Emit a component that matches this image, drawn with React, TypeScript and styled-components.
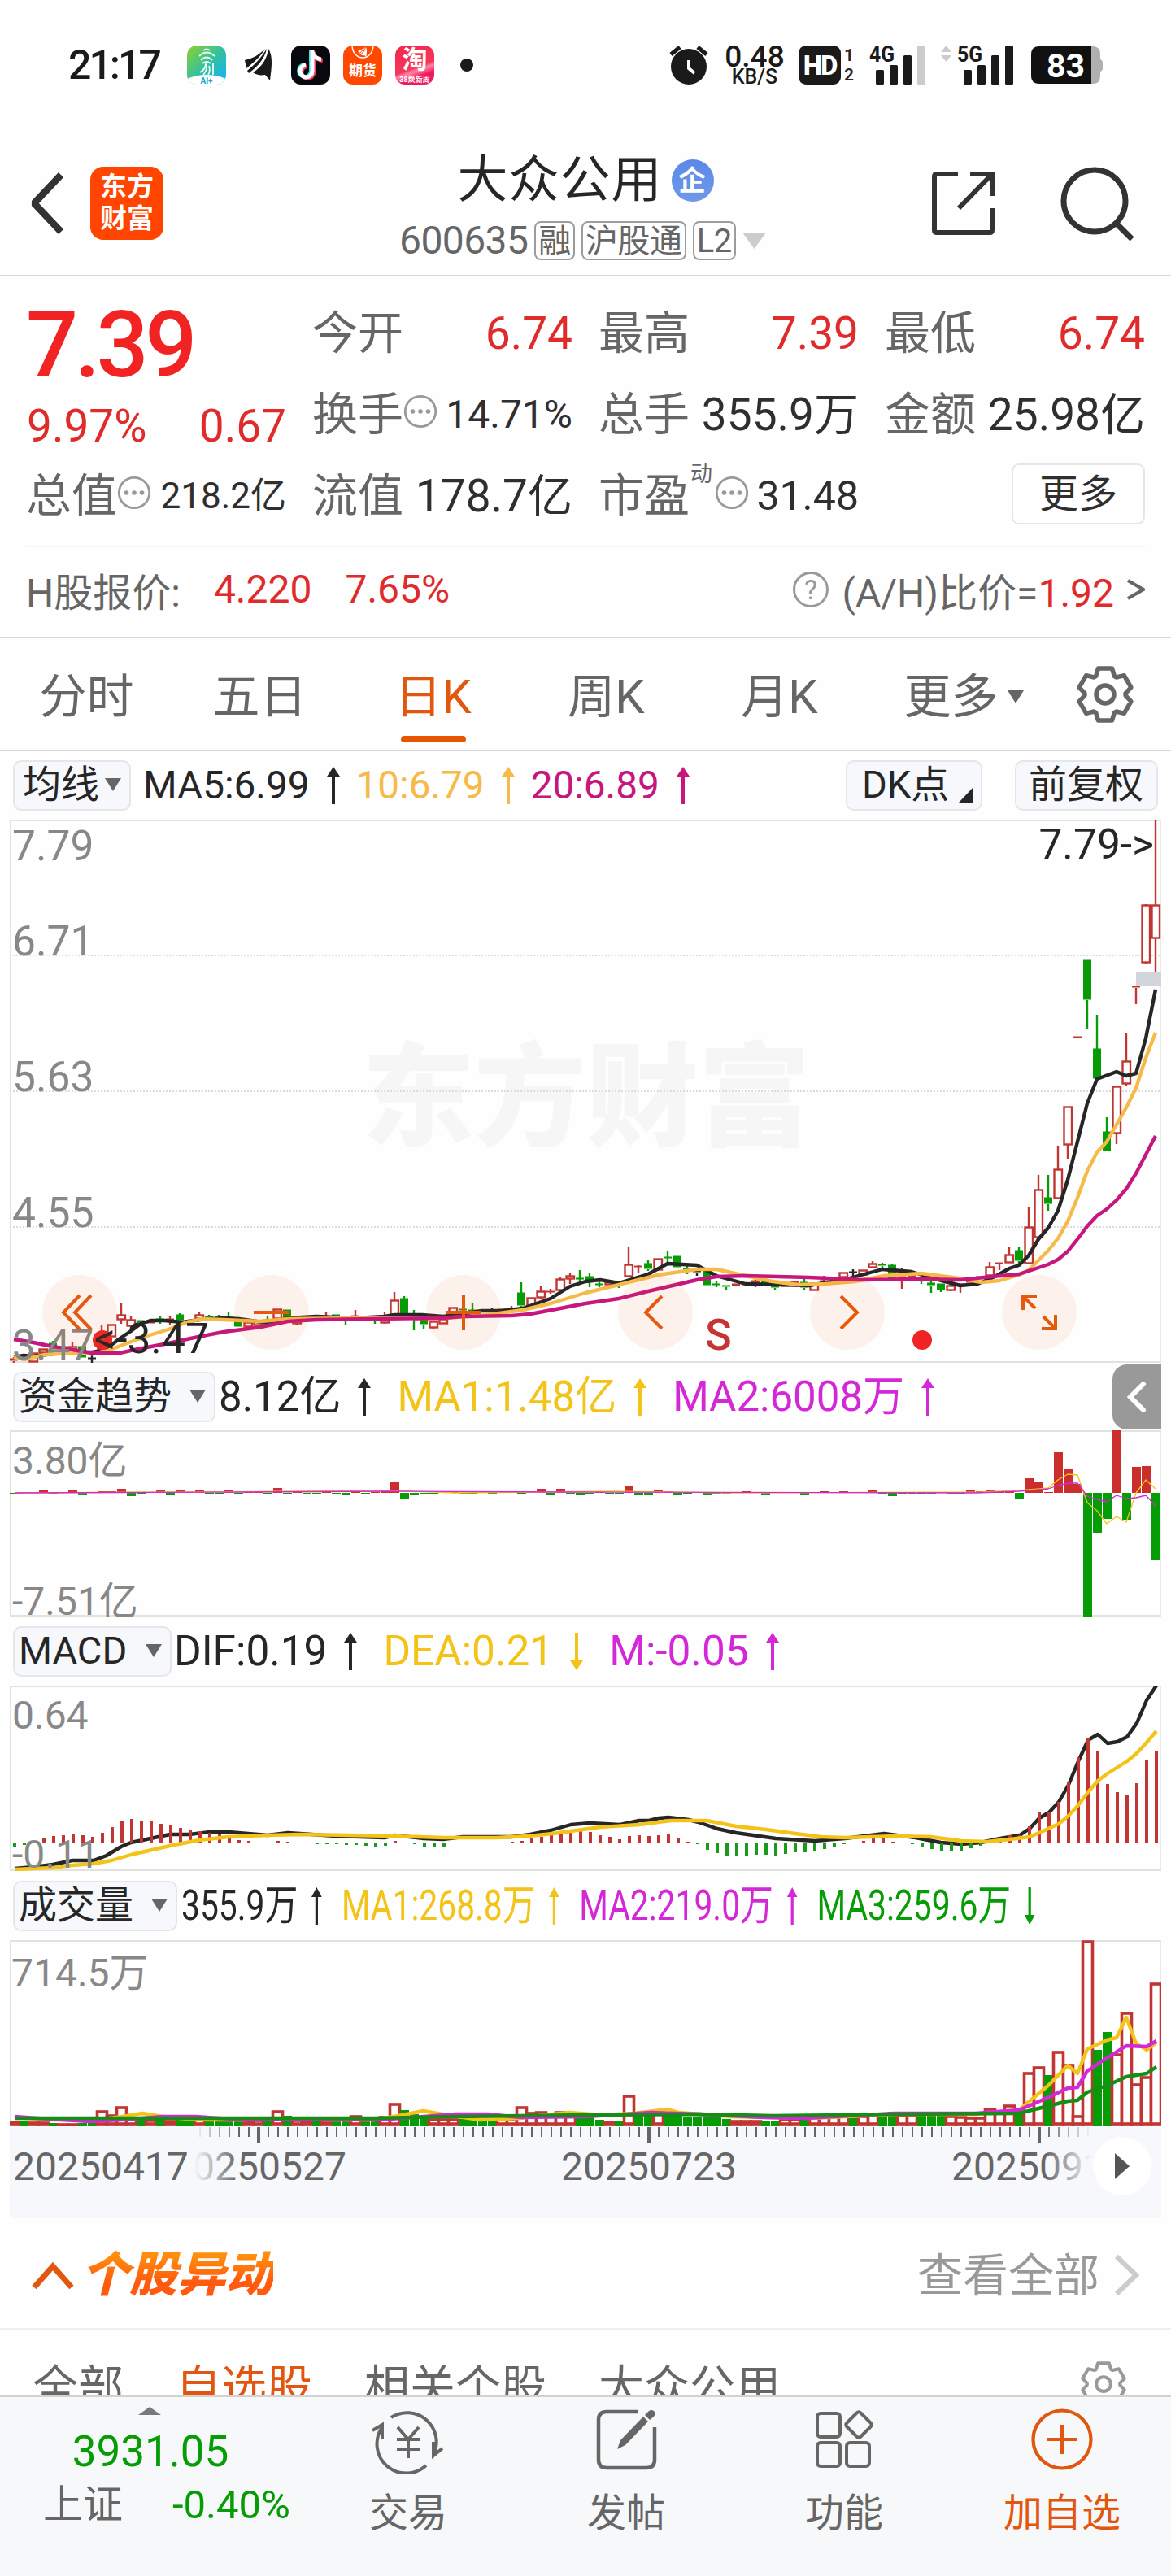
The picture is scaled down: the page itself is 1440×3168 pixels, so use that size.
import React from "react";
import styled, { createGlobalStyle } from "styled-components";

const RED = "#e02b2b";
const BAR_RED = "#c13632";
const GREEN = "#069c06";
const ORANGE = "#e2570f";
const YELLOW = "#f3c318";
const AMBER = "#f6ba49";
const MAGENTA = "#c5177d";
const VIOLET = "#d428d8";
const INK = "#262626";
const GRAY = "#666";

const GlobalStyle = createGlobalStyle`
  * { box-sizing: border-box; }
  body {
    margin: 0;
    background: #fefefe;
    font-family: Roboto, "Noto Sans CJK SC", sans-serif;
    color: ${INK};
  }
  svg { display: block; flex: none; }
`;

const Page = styled.div`
  width: 1440px;
  height: 3168px;
  overflow: hidden;
  display: flex;
  flex-direction: column;
`;

/* ---------- status bar ---------- */
const StatusBar = styled.div`
  height: 160px;
  flex: none;
  display: flex;
  align-items: center;
  padding: 0 84px 0 84px;
`;
const Clock = styled.div`
  width: 146px;
  font-size: 50px;
  font-weight: 500;
  letter-spacing: -3px;
  color: #1a1a1a;
  white-space: nowrap;
`;
const AppIcons = styled.div`
  display: flex;
  align-items: center;
  gap: 16px;
`;
const Dot = styled.i`
  width: 16px;
  height: 16px;
  border-radius: 50%;
  background: #1a1a1a;
  margin-left: 16px;
`;
const AppTile = styled.div<{ bg: string }>`
  width: 48px;
  height: 48px;
  border-radius: 12px;
  background: ${(p) => p.bg};
  color: #fff;
  overflow: hidden;
  display: flex;
  flex-direction: column;
  align-items: center;
`;
const TileText = styled.span<{ size: number; line: number }>`
  font-size: ${(p) => p.size}px;
  line-height: ${(p) => p.line}px;
  font-weight: 700;
  white-space: nowrap;
`;
const StatusRight = styled.div`
  margin-left: auto;
  display: flex;
  align-items: center;
  svg { overflow: visible; }
`;
const NetSpeed = styled.div`
  width: 78px;
  margin: 0 15px 0 18px;
  display: flex;
  flex-direction: column;
  align-items: center;
  font-size: 37px;
  line-height: 30px;
  font-weight: 500;
  color: #1a1a1a;
  small {
    font-size: 25px;
    line-height: 20px;
  }
`;
const HdBox = styled.div`
  width: 52px;
  height: 48px;
  border-radius: 9px;
  background: #1a1a1a;
  color: #fff;
  font-size: 33px;
  line-height: 49px;
  font-weight: 800;
  letter-spacing: -2px;
  text-align: center;
`;
const SimNumbers = styled.div`
  width: 35px;
  padding-left: 4px;
  font-size: 21px;
  line-height: 24px;
  font-weight: 600;
`;

/* ---------- title ---------- */
const Header = styled.header`
  height: 180px;
  flex: none;
  border-bottom: 2px solid #d8d8d8;
  display: flex;
  align-items: center;
  padding: 2px 43px 0 35px;
`;
const Logo = styled.div`
  width: 90px;
  height: 90px;
  margin: 0 0 0 31px;
  border-radius: 16px;
  background: #ff4500;
  color: #fff;
  font-size: 33px;
  line-height: 39px;
  font-weight: 700;
  text-align: center;
  padding-top: 5px;
`;
const TitleBlock = styled.div`
  width: 820px;
  margin: 2px 0 0 108px;
  display: flex;
  flex-direction: column;
  align-items: center;
`;
const Title = styled.div`
  display: flex;
  align-items: center;
  height: 80px;
  font-size: 62px;
  line-height: 80px;
  letter-spacing: 1px;
  padding-left: 2px;
`;
const Badge = styled.span`
  width: 52px;
  height: 52px;
  margin-left: 11px;
  border-radius: 50%;
  background: linear-gradient(#5a88ea, #6f99e8);
  color: #fff;
  font-size: 34px;
  line-height: 52px;
  font-weight: 700;
  text-align: center;
`;
const CodeRow = styled.div`
  display: flex;
  align-items: center;
  height: 50px;
  margin-top: 9px;
  padding-right: 5px;
  gap: 8px;
  color: ${GRAY};
  font-size: 48px;
  line-height: 50px;
  letter-spacing: -0.6px;
`;
const Tag = styled.span`
  height: 48px;
  padding: 0 3px;
  border: 2px solid #9c9c9c;
  border-radius: 8px;
  font-size: 40px;
  line-height: 45px;
  letter-spacing: -0.4px;
`;
const HeaderIcons = styled.div`
  margin-left: auto;
  display: flex;
  align-items: center;
  gap: 80px;
`;

/* ---------- quote ---------- */
const Quote = styled.section`
  height: 333px;
  flex: none;
  margin: 0 32px;
  padding-top: 20px;
  border-bottom: 2px solid #f4f4f4;
  display: grid;
  grid-template-columns: repeat(4, 320px);
  column-gap: 32px;
  grid-template-rows: repeat(3, 100px);
`;
const PriceBlock = styled.div`
  grid-row: span 2;
`;
const Price = styled.div`
  font-size: 113px;
  line-height: 130px;
  font-weight: 500;
  letter-spacing: -4.5px;
  color: #f22323;
`;
const Change = styled.div`
  display: flex;
  justify-content: space-between;
  font-size: 55px;
  line-height: 69px;
  color: ${RED};
  padding: 0 0 0 1px;
`;
const Cell = styled.div`
  display: flex;
  align-items: center;
  white-space: nowrap;
  line-height: 100px;
  svg { margin-bottom: 9px; }
`;
const CellLabel = styled.span`
  font-size: 56px;
  color: ${GRAY};
`;
const CellSup = styled.sup`
  align-self: flex-start;
  margin: 8px 3px 0 1px;
  font-size: 27px;
  line-height: 30px;
  color: ${GRAY};
`;
const CellValue = styled.span<{ size?: number; up?: boolean }>`
  margin-left: auto;
  font-size: ${(p) => p.size ?? 55}px;
  color: ${(p) => (p.up ? RED : "#2f2f2f")};
`;
const MoreButton = styled.button`
  width: 164px;
  height: 75px;
  margin: -5px 0 0 auto;
  border: 2px solid #e6e6e6;
  border-radius: 9px;
  background: #fff;
  font: inherit;
  font-size: 48px;
  line-height: 66px;
  color: #2f2f2f;
  padding: 0;
`;
const HShare = styled.div`
  height: 112px;
  flex: none;
  border-bottom: 2px solid #d8d8d8;
  padding: 0 32px 7px;
  display: flex;
  align-items: center;
  font-size: 48px;
  color: ${GRAY};
  white-space: nowrap;
`;
const Up = styled.span<{ gap?: number }>`
  color: ${RED};
  margin-left: ${(p) => p.gap ?? 0}px;
`;
const Ratio = styled.div`
  margin-left: auto;
  display: flex;
  align-items: center;
  gap: 16px;
`;

/* ---------- tabs ---------- */
const Tabs = styled.nav`
  height: 139px;
  flex: none;
  border-bottom: 2px solid #d8d8d8;
  display: grid;
  grid-template-columns: repeat(6, 213px) 1fr;
  align-items: center;
  justify-items: center;
`;
const Tab = styled.div<{ active?: boolean; shift?: number }>`
  height: 137px;
  display: flex;
  align-items: center;
  gap: 11px;
  font-size: 58px;
  line-height: 80px;
  padding: 7px 0 0 ${(p) => p.shift ?? 0}px;
  color: ${(p) => (p.active ? ORANGE : GRAY)};
  position: relative;
  &::after {
    content: "";
    display: ${(p) => (p.active ? "block" : "none")};
    position: absolute;
    left: 8px;
    bottom: 9px;
    width: 80px;
    height: 8px;
    border-radius: 4px;
    background: #e85500;
  }
`;

/* ---------- chart ---------- */
const LegendRow = styled.div<{ h: number }>`
  height: ${(p) => p.h}px;
  flex: none;
  padding: 0 16px;
  display: flex;
  align-items: center;
  position: relative;
`;
const Chip = styled.div<{ w: number; pad?: number }>`
  width: ${(p) => p.w}px;
  height: 62px;
  flex: none;
  border: 2px solid #e4e6ea;
  border-radius: 10px;
  background: #f7f8fb;
  display: flex;
  align-items: center;
  justify-content: space-between;
  padding: 0 10px 2px ${(p) => p.pad ?? 5}px;
  font-size: 47px;
  line-height: 56px;
  white-space: nowrap;
`;
const Readings = styled.div<{ gap: number; left: number; size?: number; squeeze?: number }>`
  display: flex;
  align-items: center;
  gap: ${(p) => p.gap}px;
  margin-left: ${(p) => p.left}px;
  font-size: ${(p) => p.size ?? 51}px;
  line-height: 60px;
  white-space: nowrap;
  transform: scaleX(${(p) => p.squeeze ?? 1});
  transform-origin: left center;
`;
const Reading = styled.span<{ color: string }>`
  display: flex;
  align-items: center;
  gap: 21px;
  color: ${(p) => p.color};
`;
const LegendRight = styled.div`
  margin-left: auto;
  display: flex;
  gap: 40px;
`;
const Pane = styled.div`
  width: 1416px;
  flex: none;
  margin-left: 12px;
  position: relative;
`;
const PaneButtons = styled.div`
  position: absolute;
  left: 40px;
  top: 560px;
  display: flex;
  gap: 144px;
`;
const RoundButton = styled.div`
  width: 92px;
  height: 92px;
  border-radius: 50%;
  background: rgba(240, 90, 10, 0.08);
  display: flex;
  align-items: center;
  justify-content: center;
`;
const DrawerHandle = styled.div`
  position: absolute;
  right: 12px;
  top: 2px;
  width: 60px;
  height: 80px;
  border-radius: 18px 0 0 18px;
  background: #999;
  display: flex;
  align-items: center;
  justify-content: center;
`;

/* ---------- movers ---------- */
const MoversHead = styled.div`
  height: 137px;
  flex: none;
  border-bottom: 2px solid #eee;
  display: flex;
  align-items: center;
  padding: 4px 38px 0;
`;
const MoversTitle = styled.span`
  margin-left: 7px;
  font-size: 59px;
  line-height: 80px;
  font-weight: 900;
  font-style: italic;
  background: linear-gradient(#ff8f0e 20%, #ff5a0e 60%);
  background-clip: text;
  -webkit-background-clip: text;
  color: transparent;
`;
const SeeAll = styled.span`
  margin-left: auto;
  margin-right: 18px;
  padding-top: 2px;
  font-size: 56px;
  line-height: 80px;
  color: #999;
`;
const MoversTabs = styled.div`
  height: 81px;
  flex: none;
  overflow: hidden;
  display: flex;
  align-items: flex-start;
  gap: 64px;
  padding: 0 54px 0 40px;
  font-size: 56px;
  line-height: 142px;
  color: ${GRAY};
  svg {
    margin: 38px 0 0 auto;
  }
`;
const MoversTab = styled.span<{ active?: boolean }>`
  color: ${(p) => (p.active ? ORANGE : GRAY)};
`;

/* ---------- bottom bar ---------- */
const BottomBar = styled.footer`
  height: 222px;
  flex: none;
  border-top: 2px solid #cfd3d6;
  background: #f7f8fa;
  display: grid;
  grid-template-columns: 368px repeat(4, 1fr);
`;
const IndexBlock = styled.div`
  display: flex;
  flex-direction: column;
  align-items: center;
  padding-top: 12px;
  color: ${GREEN};
`;
const IndexValue = styled.div`
  margin: 13px 0 0 2px;
  font-size: 53px;
  line-height: 64px;
`;
const IndexRow = styled.div`
  width: 315px;
  display: flex;
  justify-content: space-between;
  font-size: 49px;
  line-height: 66px;
  margin: 1px 0 0 42px;
  align-self: flex-start;
  padding-left: 11px;
  span:first-child {
    color: ${GRAY};
  }
`;
const BarItem = styled.div<{ hot?: boolean }>`
  display: flex;
  flex-direction: column;
  align-items: center;
  padding-top: 9px;
  font-size: 48px;
  line-height: 68px;
  color: ${(p) => (p.hot ? ORANGE : GRAY)};
  svg {
    margin-bottom: 14px;
  }
`;

/* ---------- icons ---------- */
function Caret({ w = 20, h = 16, color = GRAY, up = false }: { w?: number; h?: number; color?: string; up?: boolean }) {
  return (
    <svg width={w} height={h} viewBox="0 0 20 16" preserveAspectRatio="none">
      <path d={up ? "M0 16h20L10 0z" : "M0 0h20L10 16z"} fill={color} />
    </svg>
  );
}

function Trend({ down = false }: { down?: boolean }) {
  return (
    <svg width="16" height="46" viewBox="0 0 16 46" transform={down ? "rotate(180)" : undefined}>
      <path d="M8 8v38" stroke="currentColor" strokeWidth="4" />
      <path d="M0 12 8 0l8 12z" fill="currentColor" />
    </svg>
  );
}

function gearPath(r: number) {
  const pts: string[] = [];
  for (let t = 0; t < 6; t++) {
    [[-27, 0.76], [-15, 1], [15, 1], [27, 0.76]].forEach(([da, k]) => {
      const a = ((t * 60 + da - 90) * Math.PI) / 180;
      pts.push(`${(Math.cos(a) * r * k).toFixed(2)} ${(Math.sin(a) * r * k).toFixed(2)}`);
    });
  }
  return `M${pts.join("L")}Z`;
}

function Gear({ size, color, stroke }: { size: number; color: string; stroke: number }) {
  return (
    <svg width={size} height={size} viewBox="-36 -36 72 72" fill="none" stroke={color} strokeWidth={stroke} strokeLinejoin="round">
      <path d={gearPath(33)} />
      <circle r="11" />
    </svg>
  );
}

function MoreDots() {
  return (
    <svg width="42" height="42" viewBox="0 0 42 42">
      <circle cx="21" cy="21" r="18.7" fill="none" stroke="#999" strokeWidth="2.8" />
      <g fill="#999">
        <circle cx="11.5" cy="21" r="2.8" />
        <circle cx="21" cy="21" r="2.8" />
        <circle cx="30.5" cy="21" r="2.8" />
      </g>
    </svg>
  );
}

function Signal({ label, last, arrows }: { label: string; last: string; arrows?: boolean }) {
  return (
    <svg width={arrows ? 90 : 70} height="52" viewBox={arrows ? "-20 0 90 52" : "0 0 70 52"} fill="#1a1a1a">
      {arrows && <path d="M-20 10l6.500-8 6.500 8zM-20 14l6.500 8 6.500-8z" fill="#ccc" />}
      <text x="0" y="22" fontSize="28" fontWeight="700" textLength="31" lengthAdjust="spacingAndGlyphs">{label}</text>
      <rect x="8" y="32" width="10" height="18" rx="1.500" />
      <rect x="25" y="26" width="10" height="24" rx="1.500" />
      <rect x="42" y="14" width="10" height="36" rx="1.500" />
      <rect x="59" y="2" width="10" height="48" rx="1.500" fill={last} />
    </svg>
  );
}

const wing = "M0 14C10 12 18 7 25 0C20 9 11 17 2 24ZM27 0C25 11 16 22 5 30L3 27C13 19 21 10 27 0ZM29 0C34 8 34 18 31 39L25 32C19 33 14 32 10 29C22 22 28 10 29 0Z";

/* ---------- chart data: pixel rows measured down from the top of each pane ---------- */
// colour, body top, body bottom, high, low
const candles = `r 663 666 661 668|k 660 662|r 656 667|r 651 656|g 644 649 641 651|r 648 650|r 648 652 642 655|g 648 662|k 662 663 658 668|r 637 651 622 651
r 621 636|r 609 615 595 620|r 615 623 611 625|g 616 619|r 617 620|g 614 615 611 620|r 614 616 611 622|g 609 616 607 618|g 616 618|r 609 614 606 616
g 611 612 609 614|g 612 613 609 614|g 612 614 606 616|g 617 624|r 618 624|r 617 622|g 615 618 611 620|r 602 614|g 603 613|r 614 620 610 621
r 613 615|g 611 613|r 611 613 606 614|g 609 610 609 613|g 612 614 611 621|r 610 611 603 613|g 613 617|g 615 617 614 620|r 611 619 605 620|r 591 609 581 610
g 589 608 586 610|g 608 610 603 628|g 615 621 613 626|r 617 625 616 626|r 614 620|r 600 606|g 602 603|g 603 604 595 606|k 604 605|k 604 605 601 607
r 602 604|r 601 602 598 603|g 582 598 569 600|r 588 598|r 580 588 574 590|r 580 581 577 583|r 565 579 562 580|r 561 565 557 571|g 564 565 554 568|g 562 568 557 575
g 571 572 568 575|r 568 572|g 570 572 568 576|r 547 562 525 563|r 549 550 548 558|g 546 553 542 555|r 540 554|g 538 539 530 546|g 537 551|g 552 554 548 559
k 555 557 552 561|g 555 573|g 571 572 567 575|g 573 575 573 579|r 571 574|r 570 573|r 567 570 563 575|g 568 574|g 574 576 572 578|r 572 575
r 568 571|g 569 576 561 578|r 570 579|r 567 568 561 570|r 565 567|r 557 563|k 556 558 553 562|r 554 560|r 546 551 543 552|g 547 549 545 551
g 548 565 547 565|r 562 565 552 577|r 560 563|g 565 567 563 571|g 570 573 568 582|g 571 579 571 581|r 573 579 568 580|r 571 573 571 582|r 567 570|r 562 565
r 550 561 544 561|r 545 547 545 554|r 535 545 526 545|g 530 543 526 546|r 501 546 477 546|r 455 514 437 514|g 465 473 437 481|r 430 466 401 466|r 353 400 353 417|r 267 269
g 173 222 173 258|g 282 319 240 319|g 384 408 366 408|r 328 386 328 399|r 297 325 262 328|r 205 207 205 227|r 105 176 104 178|r 105 146 0 187`
  .split(/[|\n]/)
  .map((row) => {
    const [tone, ...n] = row.trim().split(" ");
    const [top, bottom, high = top, low = bottom] = n.map(Number);
    return { tone, top, bottom, high, low };
  });

const ma5 = "17,661 29,659 41,660 65,657 89,655 113,655 125,653 137,646 149,637 161,629 173,620 185,616 202,616 225,618 245,615 275,613 294,614 329,619 354,613 389,611 436,613 473,611 485,609 519,609 545,611 569,608 592,604 617,604 643,601 677,589 701,574 720,568 738,566 761,570 797,559 821,546 857,548 881,561 917,571 959,572 995,573 1041,565 1085,553 1121,556 1147,564 1181,573 1202,571 1217,565 1229,559 1241,552 1253,548 1265,536 1277,516 1289,502 1301,481 1313,443 1325,396 1337,349 1349,319 1373,310 1385,315 1397,312 1409,269 1421,209";
const ma10 = "17,661 30,664 55,658 87,656 113,657 133,653 156,644 184,634 207,627 230,618 248,614 275,615 321,617 354,614 436,613 545,613 592,610 643,603 677,595 720,582 761,572 809,560 857,553 881,553 917,561 950,568 982,572 1014,571 1051,568 1087,561 1133,558 1179,564 1207,569 1229,567 1253,560 1265,554 1289,530 1301,515 1313,494 1325,465 1337,432 1349,409 1361,396 1385,354 1397,330 1409,293 1421,262";
const ma20 = "17,639 41,643 65,648 89,652 113,656 147,656 170,651 207,644 239,637 275,630 321,624 354,617 389,615 459,614 545,613 569,611 629,610 652,608 689,601 720,595 761,589 797,580 857,566 881,562 917,561 995,563 1060,566 1133,565 1181,566 1220,562 1253,559 1277,551 1289,547 1301,541 1313,531 1325,516 1337,500 1349,487 1361,479 1373,468 1385,454 1397,435 1409,412 1421,389";

const flows = [
  -1, 1, 1, 3, -1, 1, 3, -3, 1, 2, 2, 5, -4, -1, 1, 3, -2, 3, 1, 4, -1, -1, 3, -1, 2, 1, -1, 6, -1, 1, -1, -1, 3, -1, -2, 4, -1, 1, 3, 13,
  -8, -3, -1, -1, 1, 1, -1, -1, 1, -1, 1, 2, -1, 1, 5, -2, 5, -1, -2, -1, 1, -1, -1, 8, -2, -2, 3, 2, -3, -1, 1, -2, -1, -1, 1, 2, 1, -2, 1, 1,
  1, -2, 1, 2, 1, 2, 1, 1, 3, -1, -4, -1, -1, -1, -1, 1, -1, -1, 3, 2, 4, 1, 2, -8, 18, 14, 1, 50, 30, 11, -152, -49, -32, 77, -33, 32, 33, -83,
];
const flowMa1 = "18,77 240,76 480,74 560,77 760,75 900,77 1207,76 1253,74 1265,73 1289,71 1301,61 1313,54 1325,55 1337,89 1349,99 1361,115 1373,106 1385,113 1397,77 1409,61 1421,72";
const flowMa2 = "18,77 300,76 480,75 700,76 1200,77 1253,75 1289,72 1301,68 1313,65 1325,65 1337,81 1349,85 1361,88 1373,80 1385,84 1397,83 1409,80 1421,93";

const macd = [
  -4, -2, 1, 6, 9, 10, 12, 10, 8, 13, 20, 28, 30, 28, 27, 24, 22, 19, 16, 15, 13, 12, 8, 4, 3, 1, 0, 3, 2, 1, 0, -1, -1, -1, -2, -2, -3, -4, -3, 3,
  1, -1, -4, -5, -4, 0, 1, 1, 1, 0, 1, 2, 3, 6, 8, 10, 13, 17, 16, 14, 10, 8, 5, 9, 10, 9, 10, 11, 7, 2, -1, -8, -12, -15, -16, -15, -14, -14, -15, -13,
  -11, -11, -9, -7, -4, -1, 1, 3, 6, 7, 2, 0, -1, -4, -7, -10, -10, -9, -6, -3, 2, 5, 10, 10, 21, 38, 39, 51, 75, 106, 129, 113, 73, 63, 59, 74, 103, 114,
];
const dif = "18,225 41,223 65,220 89,215 115,215 131,209 149,198 161,193 185,188 209,183 233,183 257,180 281,180 329,184 354,181 413,185 473,187 485,184 521,188 545,189 569,186 629,186 652,183 677,178 702,171 726,169 762,171 786,166 798,166 810,163 822,162 847,165 859,168 882,176 905,181 954,188 1002,191 1039,188 1087,182 1126,187 1157,193 1182,195 1206,193 1230,188 1254,184 1266,176 1278,163 1290,156 1302,143 1314,122 1326,93 1338,67 1350,60 1362,71 1374,69 1386,63 1398,46 1410,18 1422,0";
const dea = "18,226 65,224 89,221 115,219 137,215 161,208 209,197 245,190 281,186 329,184 370,183 485,185 545,187 610,187 650,185 680,182 738,174 786,171 825,166 869,166 905,173 942,177 978,182 1010,186 1039,187 1102,185 1145,186 1182,191 1213,192 1242,189 1266,186 1278,181 1302,170 1314,160 1326,147 1338,131 1350,117 1362,108 1386,93 1398,83 1410,70 1422,56";

const volumes = [
  6, 5, 5, 5, 3, 3, 3, 3, 4, 19, 14, 24, 10, 9, 8, 7, 7, 9, 8, 9, 8, 7, 8, 8, 7, 8, 9, 19, 12, 8, 7, 7, 7, 6, 8, 13, 8, 7, 12, 28,
  19, 14, 11, 9, 9, 9, 8, 7, 7, 7, 9, 9, 24, 17, 18, 16, 18, 17, 15, 10, 7, 6, 6, 38, 17, 16, 16, 17, 16, 10, 11, 12, 10, 8, 7, 7, 7, 6, 6, 9,
  9, 8, 11, 13, 12, 14, 12, 13, 16, 14, 17, 14, 14, 13, 13, 14, 13, 12, 11, 11, 22, 17, 26, 18, 66, 73, 62, 92, 76, 13, 228, 93, 115, 89, 140, 52, 61, 176,
];
const volMa1 = "18,218 60,221 120,221 150,217 175,213 200,217 240,221 300,221 340,219 400,221 460,221 490,216 520,210 550,215 590,221 640,219 680,214 700,212 740,215 780,213 821,208 835,212 900,217 1000,219 1100,214 1200,214 1253,209 1266,198 1290,178 1313,154 1325,164 1337,134 1361,123 1373,120 1385,95 1397,127 1410,135 1422,126";
const volMa2 = "18,217 60,220 110,223 150,221 200,217 240,217 300,221 480,220 560,214 600,214 640,218 720,217 800,212 860,214 940,218 990,219 1100,213 1200,213 1253,209 1290,193 1313,182 1325,181 1337,161 1361,145 1385,130 1410,131 1422,124";
const volMa3 = "18,219 110,219 200,219 340,219 460,219 560,217 720,215 860,214 950,216 1100,214 1253,213 1277,207 1313,198 1325,197 1337,187 1361,179 1385,168 1410,164 1422,156";

// days whose volume bar is coloured against the previous close rather than the open
const volumeTone: Record<number, string> = { 52: "r", 64: "g", 110: "r" };

const toneColor: Record<string, string> = { r: BAR_RED, g: GREEN, k: INK };
const barX = (i: number) => 18 + i * 12;

interface PaneSvgProps {
  height: number;
  children: React.ReactNode;
}

function PaneSvg({ height, children }: PaneSvgProps) {
  return (
    <svg width="1416" height={height} viewBox={`12 0 1416 ${height}`} fill="none">
      <path d={`M12 1H1428M12 ${height - 1}H1428`} stroke="#e2e2e2" strokeWidth="2" />
      <path d={`M12.500 0V${height}M1427 0V${height}`} stroke="#e2e2e2" strokeWidth="1.500" />
      {children}
    </svg>
  );
}

function AxisLabel({ y, x = 15, size = 48, children }: { y: number; x?: number; size?: number; children: string }) {
  return (
    <text x={x} y={y} fontSize={size} fill="#888">
      {children}
    </text>
  );
}

function Line({ points, color, width = 4.4 }: { points: string; color: string; width?: number }) {
  return <polyline points={points} stroke={color} strokeWidth={width} strokeLinejoin="round" />;
}

function PricePane() {
  return (
    <Pane>
      <PaneSvg height={668}>
        <text x="445" y="390" fontSize="138" fontWeight="900" fill="#f6f6f6">东方财富</text>
        {[167, 334, 501].map((y) => (
          <path key={y} d={`M12 ${y}H1428`} stroke="#dcdcdc" strokeWidth="2" strokeDasharray="2 2" />
        ))}
        {candles.map((c, i) => {
          const x = barX(i) - 1;
          const color = toneColor[c.tone];
          const hollow = c.tone === "r" && c.bottom - c.top > 3;
          return (
            <g key={i}>
              <path d={`M${x} ${c.high}V${c.top}M${x} ${c.bottom}V${c.low}`} stroke={color} strokeWidth="2.400" />
              {hollow ? (
                <rect x={x - 4.500} y={c.top + 0.500} width="9.500" height={c.bottom - c.top - 1} fill="#fff" fillOpacity="0.7" stroke={color} strokeWidth="2.400" />
              ) : (
                <rect x={x - 5} y={c.top - 0.500} width="10" height={Math.max(2, c.bottom - c.top)} fill={color} />
              )}
            </g>
          );
        })}
        <rect x="1397" y="187" width="31" height="18" fill="#d2d5da" />
        <Line points={ma5} color={INK} />
        <Line points={ma10} color={AMBER} />
        <Line points={ma20} color={MAGENTA} />
        <circle cx="126" cy="640" r="12" fill="#f02424" />
        <circle cx="1134" cy="640" r="12" fill="#f02424" />
        <text x="867" y="652" fontSize="54" fontWeight="500" fill="#c73434">S</text>
        <AxisLabel y={50} size={51.5}>7.79</AxisLabel>
        <AxisLabel y={167} size={51.5}>6.71</AxisLabel>
        <AxisLabel y={334} size={51.5}>5.63</AxisLabel>
        <AxisLabel y={501} size={51.5}>4.55</AxisLabel>
        <AxisLabel y={664} size={51.5}>3.47</AxisLabel>
        <text x="116" y="656" fontSize="51.500" fill={INK}>&lt;-3.47</text>
        <text x="1419" y="48" fontSize="51.500" fill={INK} textAnchor="end">7.79-&gt;</text>
      </PaneSvg>
      <PaneButtons>
        {[
          "M46 25 26 46 46 67M60 25 40 46 60 67",
          "M24 46H68",
          "M24 46H68M46 24V68",
          "M54 26 34 46 54 66",
          "M38 26 58 46 38 66",
          "M26 43V26H43M27 27 41 41M66 49V66H49M65 65 51 51",
        ].map((d) => (
          <RoundButton key={d}>
            <svg width="92" height="92" fill="none" stroke="#e5590f" strokeWidth="4">
              <path d={d} />
            </svg>
          </RoundButton>
        ))}
      </PaneButtons>
    </Pane>
  );
}

function FlowPane() {
  return (
    <Pane>
      <PaneSvg height={229}>
        {flows.map((v, i) => (
          <rect key={i} x={barX(i) - 6} y={v > 0 ? 77 - v : 77} width="11" height={Math.abs(v)} fill={v > 0 ? "#cc2e2c" : GREEN} />
        ))}
        <Line points={flowMa1} color={YELLOW} width={1.3} />
        <Line points={flowMa2} color={VIOLET} width={1.3} />
        <AxisLabel y={54}>3.80亿</AxisLabel>
        <AxisLabel y={227}>-7.51亿</AxisLabel>
      </PaneSvg>
    </Pane>
  );
}

function MacdPane() {
  return (
    <Pane>
      <PaneSvg height={228}>
        <Line points={dif} color={INK} />
        {macd.map((v, i) => (
          <rect key={i} x={barX(i) - 2} y={v > 0 ? 194 - v : 194} width="4" height={Math.abs(v)} fill={v > 0 ? BAR_RED : "#1a9a1a"} />
        ))}
        <Line points={dea} color={YELLOW} />
        <AxisLabel y={53}>0.64</AxisLabel>
        <AxisLabel y={224}>-0.11</AxisLabel>
      </PaneSvg>
    </Pane>
  );
}

function VolumePane() {
  return (
    <Pane>
      <PaneSvg height={228}>
        {volumes.map((v, i) => {
          const up = (volumeTone[i] ?? candles[i].tone) === "r";
          return up ? (
            <rect key={i} x={barX(i) - 6.500} y={230 - v} width="12" height={Math.max(1, v - 4)} fill="#fff" stroke={BAR_RED} strokeWidth="3.600" />
          ) : (
            <rect key={i} x={barX(i) - 6} y={228 - v} width="11" height={v} fill={GREEN} />
          );
        })}
        <Line points={volMa1} color={YELLOW} />
        <Line points={volMa2} color={VIOLET} />
        <Line points={volMa3} color="#178c17" />
        <AxisLabel y={57} x={14}>714.5万</AxisLabel>
      </PaneSvg>
    </Pane>
  );
}

function DateAxis() {
  return (
    <Pane>
      <svg width="1416" height="114" viewBox="12 0 1416 114">
        <defs>
          <linearGradient id="fadeLeft">
            <stop offset="0.1" stopColor="#f7f8fb" />
            <stop offset="1" stopColor="#f7f8fb" stopOpacity="0" />
          </linearGradient>
          <linearGradient id="fadeRight">
            <stop offset="0" stopColor="#f7f8fb" stopOpacity="0" />
            <stop offset="0.9" stopColor="#f7f8fb" />
          </linearGradient>
        </defs>
        <rect x="12" width="1416" height="114" fill="#f7f8fb" />
        {candles.map((_, i) => {
          const major = i % 40 === 25;
          return <path key={i} d={`M${barX(i)} 2V${major ? 22 : 14}`} stroke={GRAY} strokeWidth={major ? 4 : 2} />;
        })}
        <g fontSize="48" fill={GRAY} textAnchor="middle">
          <text x="318" y="67">20250527</text>
          <text x="798" y="67">20250723</text>
          <text x="1278" y="67">20250918</text>
          <rect x="12" width="222" height="114" fill="#f7f8fb" />
          <rect x="233" width="60" height="114" fill="url(#fadeLeft)" />
          <rect x="1285" width="65" height="114" fill="url(#fadeRight)" />
          <rect x="1349" width="79" height="114" fill="#f7f8fb" />
          <text x="16" y="67" textAnchor="start">20250417</text>
        </g>
        <circle cx="1380" cy="50" r="36" fill="#fff" />
        <path d="M1371 34v32l18-16z" fill="#555" />
      </svg>
    </Pane>
  );
}

export default function App() {
  return (
    <Page>
      <GlobalStyle />
      <StatusBar>
        <Clock>21:17</Clock>
        <AppIcons>
          <AppTile bg="linear-gradient(135deg,#8fd32a,#35bfa0 50%,#12b2ff)">
            <svg width="48" height="48" fill="none" stroke="#e8fff2" strokeWidth="1.800">
              <path d="M20 6Q24 3 28 6M15 13Q24 4 34 13M17 18Q24 11 31 18M19 22Q24 18 29 22M16 33Q22 30 23 23Q26 29 20 36M27 25Q29 31 26 36M32 22V36" />
              <path d="M0 41Q24 31 48 41V48H0Z" fill="#fff" stroke="none" />
              <text x="24" y="46.500" textAnchor="middle" fontSize="10" fontWeight="700" fill="#22a5c9" stroke="none">AI+</text>
            </svg>
          </AppTile>
          <svg width="48" height="48" viewBox="-7 -4 48 48">
            <path d={wing} fill="#1a1a1a" />
          </svg>
          <AppTile bg="#08080f">
            <svg width="48" height="48" fill="none" strokeWidth="5">
              <path d="M26 6V32A7.500 7.500 0 1 1 18 24M26 8Q28 16 37 17" stroke="#25e6e0" transform="translate(-1.500 -0.500)" />
              <path d="M26 6V32A7.500 7.500 0 1 1 18 24M26 8Q28 16 37 17" stroke="#f5405f" transform="translate(1.800 1.500)" />
              <path d="M26 6V32A7.500 7.500 0 1 1 18 24M26 8Q28 16 37 17" stroke="#fff" />
            </svg>
          </AppTile>
          <AppTile bg="#ff4800">
            <svg width="48" height="20" fill="none" stroke="#fff" strokeWidth="1.500">
              <path d="M11 0C12 20 36 20 37 0" />
              <path d={wing} transform="translate(18.500 2) scale(0.320)" fill="#fff" stroke="none" />
            </svg>
            <TileText size={17} line={22}>期货</TileText>
          </AppTile>
          <AppTile bg="linear-gradient(160deg,#f4264a,#f5365c 55%,#ff86a8 62%,#ee1a5b 75%)">
            <TileText size={31} line={36}>淘</TileText>
            <TileText size={9} line={12}>38焕新周</TileText>
          </AppTile>
          <Dot />
        </AppIcons>
        <StatusRight>
          <svg width="48" height="50" viewBox="0 0 48 50">
            <path d="M2 12 13 3M46 12 35 3" stroke="#1a1a1a" strokeWidth="5" />
            <circle cx="24" cy="27" r="22" fill="#1a1a1a" />
            <path d="M24 19V29L31 35" fill="none" stroke="#fff" strokeWidth="4" />
          </svg>
          <NetSpeed>
            0.48<small>KB/S</small>
          </NetSpeed>
          <HdBox>HD</HdBox>
          <SimNumbers>
            1<br />2
          </SimNumbers>
          <Signal label="4G" last="#ccc" />
          <svg width="18" height="10" />
          <Signal label="5G" last="#1a1a1a" arrows />
          <svg width="109" height="46" viewBox="-21 0 109 46">
            <path d="M66 0H76Q85 0 85 10V16Q88 17 88 20V27Q88 30 85 31V36Q85 46 76 46H66Z" fill="#b0b0b0" />
            <path d="M10 0H74V46H10Q0 46 0 36V10Q0 0 10 0Z" fill="#111" />
            <text x="19" y="38" fontSize="41" fontWeight="700" fill="#fff" textLength="47">83</text>
          </svg>
        </StatusRight>
      </StatusBar>

      <Header>
        <svg width="45" height="78" fill="none" stroke="#333" strokeWidth="8.500">
          <path d="M40 4 7 39 40 74" strokeLinejoin="bevel" />
        </svg>
        <Logo>
          东方
          <br />
          财富
        </Logo>
        <TitleBlock>
          <Title>
            大众公用<Badge>企</Badge>
          </Title>
          <CodeRow>
            600635
            <Tag>融</Tag>
            <Tag>沪股通</Tag>
            <Tag>L2</Tag>
            <Caret w={29} h={20} color="#ccc" />
          </CodeRow>
        </TitleBlock>
        <HeaderIcons>
          <svg width="80" height="80" fill="none" stroke="#333" strokeWidth="6">
            <path d="M34 4H8Q5 4 5 7V73Q5 76 8 76H73Q76 76 76 73V46" />
            <path d="M49 4H76V31M76 4 35 46" />
          </svg>
          <svg width="93" height="92" fill="none" stroke="#333" strokeWidth="7">
            <circle cx="42" cy="43" r="38" />
            <path d="M68 70 88 90" />
          </svg>
        </HeaderIcons>
      </Header>

      <Quote>
        <PriceBlock>
          <Price>7.39</Price>
          <Change>
            <span>9.97%</span>
            <span>0.67</span>
          </Change>
        </PriceBlock>
        <Cell>
          <CellLabel>今开</CellLabel>
          <CellValue up>6.74</CellValue>
        </Cell>
        <Cell>
          <CellLabel>最高</CellLabel>
          <CellValue up>7.39</CellValue>
        </Cell>
        <Cell>
          <CellLabel>最低</CellLabel>
          <CellValue up>6.74</CellValue>
        </Cell>
        <Cell>
          <CellLabel>换手</CellLabel>
          <MoreDots />
          <CellValue size={48}>14.71%</CellValue>
        </Cell>
        <Cell>
          <CellLabel>总手</CellLabel>
          <CellValue>355.9万</CellValue>
        </Cell>
        <Cell>
          <CellLabel>金额</CellLabel>
          <CellValue>25.98亿</CellValue>
        </Cell>
        <Cell>
          <CellLabel>总值</CellLabel>
          <MoreDots />
          <CellValue size={44}>218.2亿</CellValue>
        </Cell>
        <Cell>
          <CellLabel>流值</CellLabel>
          <CellValue>178.7亿</CellValue>
        </Cell>
        <Cell>
          <CellLabel>市盈</CellLabel>
          <CellSup>动</CellSup>
          <MoreDots />
          <CellValue size={50}>31.48</CellValue>
        </Cell>
        <Cell>
          <MoreButton>更多</MoreButton>
        </Cell>
      </Quote>

      <HShare>
        H股报价:
        <Up gap={41}>4.220</Up>
        <Up gap={41}>7.65%</Up>
        <Ratio>
          <svg width="46" height="46">
            <circle cx="23" cy="23" r="20.500" fill="none" stroke="#999" strokeWidth="3" />
            <text x="23" y="35" fontSize="34" fill="#999" textAnchor="middle">?</text>
          </svg>
          <span>
            (A/H)比价=<Up>1.92</Up>
          </span>
          <svg width="22" height="26" fill="none" stroke={GRAY} strokeWidth="4">
            <path d="M1 2 20 13 1 24" />
          </svg>
        </Ratio>
      </HShare>

      <Tabs>
        <Tab>分时</Tab>
        <Tab>五日</Tab>
        <Tab active>日K</Tab>
        <Tab>周K</Tab>
        <Tab>月K</Tab>
        <Tab shift={27}>
          更多
          <Caret />
        </Tab>
        <Gear size={72} color={GRAY} stroke={5.5} />
      </Tabs>

      <LegendRow h={84}>
        <Chip w={145} pad={10}>
          均线
          <Caret />
        </Chip>
        <Readings gap={20} left={15} size={47.7}>
          <Reading color={INK}>MA5:6.99<Trend /></Reading>
          <Reading color={AMBER}>10:6.79<Trend /></Reading>
          <Reading color={MAGENTA}>20:6.89<Trend /></Reading>
        </Readings>
        <LegendRight>
          <Chip w={168} pad={18}>
            DK点
            <svg width="18" height="44">
              <path d="M18 26V44H1z" fill={INK} />
            </svg>
          </Chip>
          <Chip w={176} pad={15}>前复权</Chip>
        </LegendRight>
      </LegendRow>
      <PricePane />

      <LegendRow h={83}>
        <Chip w={249}>
          资金趋势
          <Caret />
        </Chip>
        <Readings gap={32} left={4}>
          <Reading color={INK}>8.12亿<Trend /></Reading>
          <Reading color={YELLOW}>MA1:1.48亿<Trend /></Reading>
          <Reading color={VIOLET}>MA2:6008万<Trend /></Reading>
        </Readings>
        <DrawerHandle>
          <svg width="24" height="40" fill="none" stroke="#fff" strokeWidth="6" strokeLinecap="round">
            <path d="M20 4 4 20 20 36" />
          </svg>
        </DrawerHandle>
      </LegendRow>
      <FlowPane />

      <LegendRow h={85}>
        <Chip w={195}>
          MACD
          <Caret />
        </Chip>
        <Readings gap={32} left={3} size={51.3}>
          <Reading color={INK}>DIF:0.19<Trend /></Reading>
          <Reading color={YELLOW}>DEA:0.21<Trend down /></Reading>
          <Reading color={VIOLET}>M:-0.05<Trend /></Reading>
        </Readings>
      </LegendRow>
      <MacdPane />

      <LegendRow h={85}>
        <Chip w={202}>
          成交量
          <Caret />
        </Chip>
        <Readings gap={30} left={5} squeeze={0.8}>
          <Reading color={INK}>355.9万<Trend /></Reading>
          <Reading color={YELLOW}>MA1:268.8万<Trend /></Reading>
          <Reading color={VIOLET}>MA2:219.0万<Trend /></Reading>
          <Reading color={GREEN}>MA3:259.6万<Trend down /></Reading>
        </Readings>
      </LegendRow>
      <VolumePane />
      <DateAxis />

      <MoversHead>
        <svg width="55" height="36" fill="none" stroke={ORANGE} strokeWidth="7">
          <path d="M4 33 27 7 50 33" />
        </svg>
        <MoversTitle>个股异动</MoversTitle>
        <SeeAll>查看全部</SeeAll>
        <svg width="32" height="52" fill="none" stroke="#ccc" strokeWidth="6">
          <path d="M3 3 27 26 3 49" />
        </svg>
      </MoversHead>
      <MoversTabs>
        <MoversTab>全部</MoversTab>
        <MoversTab active>自选股</MoversTab>
        <MoversTab>相关个股</MoversTab>
        <MoversTab>大众公用</MoversTab>
        <Gear size={58} color="#999" stroke={5} />
      </MoversTabs>

      <BottomBar>
        <IndexBlock>
          <Caret w={28} h={10} color="#77797d" up />
          <IndexValue>3931.05</IndexValue>
          <IndexRow>
            <span>上证</span>
            <span>-0.40%</span>
          </IndexRow>
        </IndexBlock>
        <BarItem>
          <svg width="90" height="86" viewBox="0 0 90 86" fill="none" stroke={GRAY} strokeWidth="4">
            <path d="M24 16A36 36 0 0 1 76 62M67 75A36 36 0 0 1 13 28" />
            <path d="M76 46V63L87 54M1 32 13 25V42" />
            <path d="M32 28 45 43 58 28M45 43V66M31 43H59M31 55H59" />
          </svg>
          交易
        </BarItem>
        <BarItem>
          <svg width="80" height="86" viewBox="0 0 80 86" fill="none" stroke={GRAY} strokeWidth="4.500">
            <path d="M55 9H16Q6 9 6 19V68Q6 78 16 78H65Q75 78 75 68V28" />
            <path d="M29 55 33 44 61 15 67 21 39 50Z" fill={GRAY} stroke="none" />
            <path d="M63 13 68 8Q71 6 74 8Q77 11 74 15L69 19Z" fill={GRAY} stroke="none" />
          </svg>
          发帖
        </BarItem>
        <BarItem>
          <svg width="76" height="86" viewBox="0 0 76 86" fill="none" stroke={GRAY} strokeWidth="4">
            <rect x="5" y="11" width="28" height="29" rx="4" />
            <rect x="5" y="47" width="28" height="29" rx="4" />
            <rect x="41" y="47" width="28" height="29" rx="4" />
            <path d="M53.500 10.500Q56 8 58.500 10.500L70.500 22.500Q73 25 70.500 27.500L58.500 39.500Q56 42 53.500 39.500L41.500 27.500Q39 25 41.500 22.500Z" />
          </svg>
          功能
        </BarItem>
        <BarItem hot>
          <svg width="80" height="86" viewBox="0 0 80 86" fill="none" stroke={ORANGE} strokeWidth="4.200">
            <circle cx="40" cy="43" r="35.500" />
            <path d="M22 43H58M40 25V61" />
          </svg>
          加自选
        </BarItem>
      </BottomBar>
    </Page>
  );
}
